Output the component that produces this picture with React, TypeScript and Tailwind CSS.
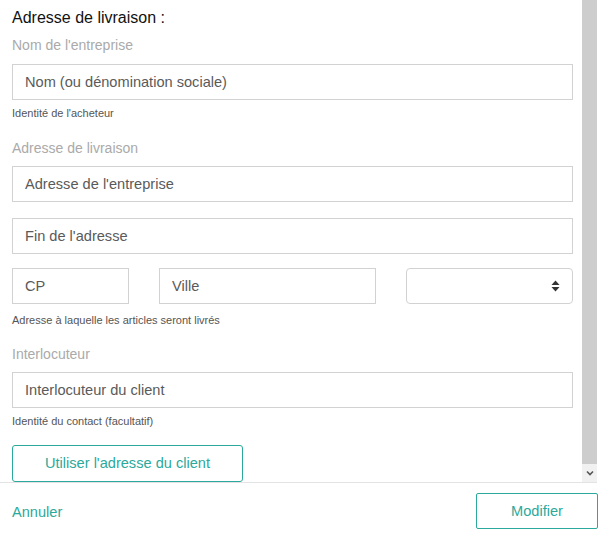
import React from 'react';

const teal = 'text-[#2ba99c]';

const Field: React.FC<{ placeholder: string; className?: string }> = ({ placeholder, className }) => (
  <div
    className={`h-[36px] border border-[#d2d2d2] bg-white px-[12px] pt-[2px] flex items-center text-[14.6px] text-[#5a5a5a] ${className ?? ''}`}
  >
    {placeholder}
  </div>
);

const Label: React.FC<{ children: React.ReactNode; className?: string }> = ({ children, className }) => (
  <div className={`h-[20px] leading-[20px] text-[14px] text-[#aaaaaa] ${className ?? ''}`}>{children}</div>
);

const Help: React.FC<{ children: React.ReactNode; className?: string }> = ({ children, className }) => (
  <div className={`h-[14px] leading-[14px] text-[11px] text-[#555] ${className ?? ''}`}>{children}</div>
);

export default function App() {
  return (
    <div className="w-[607px] h-[534px] bg-white overflow-hidden" style={{ fontFamily: '"Liberation Sans", Arial, sans-serif' }}>
      <div className="w-[597px]">
        {/* scroll area */}
        <div className="flex h-[482px] overflow-hidden">
          <div className="w-[582px] pl-[12px] pr-[9px] pt-[8px]">
            <div className="h-[20px] leading-[20px] text-[16px] text-[#111]">Adresse de livraison :</div>
            <Label className="mt-[7px]">Nom de l'entreprise</Label>
            <Field placeholder="Nom (ou dénomination sociale)" className="mt-[9px]" />
            <Help className="mt-[6px]">Identité de l'acheteur</Help>

            <Label className="mt-[18px]">Adresse de livraison</Label>
            <Field placeholder="Adresse de l'entreprise" className="mt-[8px]" />
            <Field placeholder="Fin de l'adresse" className="mt-[16px]" />

            <div className="mt-[14px] flex">
              <Field placeholder="CP" className="w-[117px]" />
              <Field placeholder="Ville" className="w-[217px] ml-[30px]" />
              <div className="w-[167px] ml-[30px] h-[36px] border border-[#d2d2d2] rounded-[4px] flex items-center justify-end pr-[12px]">
                <svg width="9" height="12" viewBox="0 0 9 12" fill="#333">
                  <path d="M4.5 0.5 L8.5 5 H0.5 Z" />
                  <path d="M4.5 11.5 L8.5 7 H0.5 Z" />
                </svg>
              </div>
            </div>
            <Help className="mt-[9px]">Adresse à laquelle les articles seront livrés</Help>

            <Label className="mt-[17px]">Interlocuteur</Label>
            <Field placeholder="Interlocuteur du client" className="mt-[8px]" />
            <Help className="mt-[6px]">Identité du contact (facultatif)</Help>

            <button className={`mt-[17px] w-[231px] h-[37px] border border-[#2ba99c] rounded-[3px] bg-white text-[14.6px] pt-[1px] ${teal}`}>
              Utiliser l'adresse du client
            </button>
          </div>
          {/* scrollbar */}
          <div className="w-[15px] h-[482px] bg-[#f1f1f1] flex flex-col">
            <div className="h-[464px] bg-[#cdcdcd]" />
            <div className="flex-1 flex items-center justify-center">
              <svg width="8" height="6" viewBox="0 0 8 6" fill="none" stroke="#555" strokeWidth="1.6">
                <path d="M1 1.5 L4 4.5 L7 1.5" />
              </svg>
            </div>
          </div>
        </div>
        {/* footer */}
        <div className="border-t border-[#e3e3e3] h-[52px] pt-[10px] pl-[12px]">
          <div className="h-[36px] flex items-center justify-between">
            <span className={`text-[14.6px] pt-[3px] ${teal}`}>Annuler</span>
            <button className={`w-[122px] h-[36px] mr-[-1px] border border-[#2ba99c] rounded-[2px] bg-white text-[14.6px] pt-[2px] ${teal}`}>
              Modifier
            </button>
          </div>
        </div>
      </div>
    </div>
  );
}
